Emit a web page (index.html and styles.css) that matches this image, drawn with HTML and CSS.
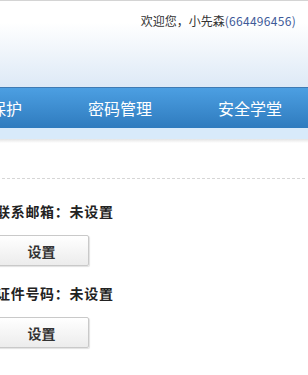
FILE: index.html
```html
<!DOCTYPE html>
<html lang="zh-CN">
<head>
  <meta charset="UTF-8">
  <title>安全中心</title>
  <link rel="stylesheet" href="styles.css">
</head>
<body>
  <div class="header">
    <div class="welcome">欢迎您，小先森<span class="uid">(664496456)</span></div>
  </div>
  <div class="nav">
    <a class="nav-item">帐号保护</a>
    <a class="nav-item">密码管理</a>
    <a class="nav-item">安全学堂</a>
  </div>
  <div class="nav-strip"></div>
  <div class="nav-shadow"></div>

  <div class="content">
    <div class="divider"></div>
    <div class="list">
      <div class="item">
        <div class="label">联系邮箱：未设置</div>
        <button class="btn">设置</button>
      </div>
      <div class="item">
        <div class="label">证件号码：未设置</div>
        <button class="btn">设置</button>
      </div>
    </div>
  </div>
</body>
</html>
```

FILE: styles.css
```css
html, body {
  margin: 0;
  padding: 0;
  background: #fff;
  overflow: hidden;
}
body {
  font-family: "Noto Sans CJK SC", "Liberation Sans", sans-serif;
  color: #333;
}
.header {
  height: 86px;
  border-top: 1px solid #d4d4d4;
  background: linear-gradient(#fff 25%, #dde9f6);
}
.welcome {
  text-align: right;
  padding: 11px 12px 0 0;
  font-size: 12px;
  line-height: 18px;
  color: #333;
}
.uid {
  color: #3d5a99;
  letter-spacing: 0.3px;
}
.nav {
  display: flex;
  height: 40px;
  margin-left: -75px;
  border-top: 1px solid #3f7bb4;
  background: linear-gradient(#4c9fe2, #2f7bbe);
}
.nav-item {
  flex: 0 0 130px;
  text-align: center;
  line-height: 41px;
  font-size: 16px;
  color: #fff;
  white-space: nowrap;
}
.nav-strip {
  height: 11px;
  background: #d8eafa;
}
.nav-shadow {
  height: 4px;
  background: linear-gradient(#e4e4e4, #fff);
}
.content {
  padding-top: 35px;
}
.divider {
  margin: 0 3px 0 2px;
  border-top: 1px dashed #d6d6d6;
}
.list {
  margin-left: -6px;
  padding-top: 22px;
}
.item {
  padding-bottom: 17px;
}
.label {
  margin-left: 2px;
  font-size: 14px;
  font-weight: bold;
  letter-spacing: 0.7px;
  line-height: 20px;
  white-space: nowrap;
  color: #222;
}
.btn {
  display: block;
  width: 95px;
  height: 31px;
  margin-top: 14px;
  border: 1px solid #c9c9c9;
  border-radius: 2px;
  background: linear-gradient(#fff, #ececec);
  box-shadow: 1px 1px 1px rgba(0, 0, 0, 0.12);
  font-family: "Noto Sans CJK SC", sans-serif;
  font-size: 14px;
  font-weight: bold;
  color: #333;
  cursor: pointer;
}
```
